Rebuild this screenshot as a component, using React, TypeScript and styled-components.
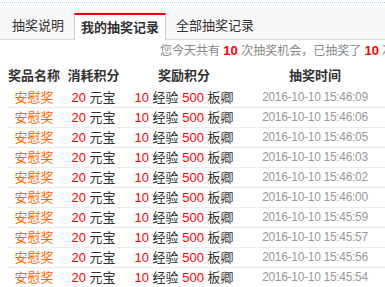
import React from 'react';
import styled, { createGlobalStyle } from 'styled-components';

const GlobalStyle = createGlobalStyle`
  html, body {
    margin: 0;
    padding: 0;
    background: #ffffff;
    overflow: hidden;
  }
  body {
    font-family: "Liberation Sans", Arial, "Noto Sans CJK SC", sans-serif;
    color: #333333;
  }
`;

const Page = styled.div`
  width: 385px;
  height: 287px;
  padding-top: 2px;
  box-sizing: border-box;
  overflow: hidden;
`;

const DottedLine = styled.div`
  border-top: 1px dotted #a8cff0;
  margin-bottom: 5px;
`;

const TabBar = styled.div`
  display: flex;
  align-items: flex-end;
  height: 31px;
  padding-left: 2px;
  background: #f7f7f7;
  border-bottom: 1px solid #dddddd;
`;

const Tab = styled.div<{ $active?: boolean }>`
  height: ${({ $active }) => ($active ? '25px' : '26px')};
  line-height: ${({ $active }) => ($active ? '25px' : '26px')};
  padding: ${({ $active }) => ($active ? '0 6px' : '0 10px')};
  font-size: 13px;
  white-space: nowrap;
  color: #333333;
  font-weight: ${({ $active }) => ($active ? 700 : 400)};
  background: ${({ $active }) => ($active ? '#ffffff' : 'transparent')};
  border-top: ${({ $active }) => ($active ? '2px solid #ee0000' : 'none')};
  border-left: ${({ $active }) => ($active ? '1px solid #d0d0d0' : 'none')};
  border-right: ${({ $active }) => ($active ? '1px solid #d0d0d0' : 'none')};
  margin-bottom: ${({ $active }) => ($active ? '-1px' : '0')};
`;

const InfoLine = styled.div`
  height: 20px;
  line-height: 20px;
  margin-top: 1px;
  padding-left: 160px;
  font-size: 12px;
  color: #888888;
  white-space: nowrap;
`;

const InfoNum = styled.b`
  color: #ff0000;
  font-size: 13px;
  font-weight: 700;
`;

const Table = styled.div`
  margin-left: 7px;
  width: 381px;
`;

const Row = styled.div<{ $head?: boolean }>`
  display: grid;
  grid-template-columns: 54px 65px 116px 146px;
  height: ${({ $head }) => ($head ? '22px' : '19px')};
  line-height: ${({ $head }) => ($head ? '22px' : '19px')};
  padding-top: ${({ $head }) => ($head ? '4px' : '0')};
  border-bottom: 1px solid ${({ $head }) => ($head ? 'transparent' : '#ececec')};
  font-size: 13px;
  font-weight: ${({ $head }) => ($head ? 700 : 400)};
  color: #333333;
`;

const Cell = styled.div`
  text-align: center;
  white-space: nowrap;
`;

const Prize = styled(Cell)`
  color: #ff6600;
`;

const Num = styled.span`
  color: #ff0000;
`;

const Time = styled(Cell)`
  color: #999999;
  font-size: 12px;
  letter-spacing: -0.3px;
`;

const times = [
  '2016-10-10 15:46:09',
  '2016-10-10 15:46:06',
  '2016-10-10 15:46:05',
  '2016-10-10 15:46:03',
  '2016-10-10 15:46:02',
  '2016-10-10 15:46:00',
  '2016-10-10 15:45:59',
  '2016-10-10 15:45:57',
  '2016-10-10 15:45:56',
  '2016-10-10 15:45:54',
];

const App: React.FC = () => (
  <>
    <GlobalStyle />
    <Page>
      <DottedLine />
      <TabBar>
        <Tab>抽奖说明</Tab>
        <Tab $active>我的抽奖记录</Tab>
        <Tab>全部抽奖记录</Tab>
      </TabBar>
      <InfoLine>
        您今天共有 <InfoNum>10</InfoNum> 次抽奖机会，已抽奖了 <InfoNum>10</InfoNum> 次
      </InfoLine>
      <Table>
        <Row $head>
          <Cell>奖品名称</Cell>
          <Cell>消耗积分</Cell>
          <Cell>奖励积分</Cell>
          <Cell>抽奖时间</Cell>
        </Row>
        {times.map((t) => (
          <Row key={t}>
            <Prize>安慰奖</Prize>
            <Cell>
              <Num>20</Num> 元宝
            </Cell>
            <Cell>
              <Num>10</Num> 经验 <Num>500</Num> 板卿
            </Cell>
            <Time>{t}</Time>
          </Row>
        ))}
      </Table>
    </Page>
  </>
);

export default App;
